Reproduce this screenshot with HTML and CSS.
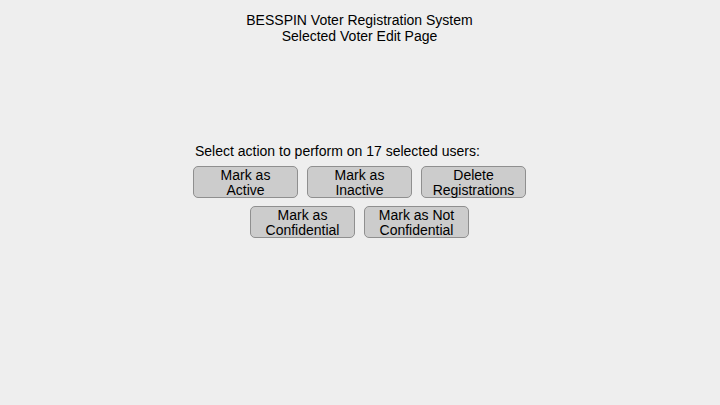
FILE: index.html
```html
<!DOCTYPE html>
<html>
<head>
<meta charset="utf-8">
<link rel="stylesheet" href="styles.css">
</head>
<body>
<header class="header">
  <div>BESSPIN Voter Registration System</div>
  <div>Selected Voter Edit Page</div>
</header>
<main class="panel">
  <div class="prompt">Select action to perform on 17 selected users:</div>
  <div class="actions">
    <button class="btn">Mark as<br>Active</button>
    <button class="btn">Mark as<br>Inactive</button>
    <button class="btn">Delete<br>Registrations</button>
    <button class="btn">Mark as<br>Confidential</button>
    <button class="btn">Mark as Not<br>Confidential</button>
  </div>
</main>
</body>
</html>
```
FILE: styles.css
```css
html {
  margin: 0;
  padding: 0;
  background: #eeeeee;
  width: 720px;
  height: 405px;
  overflow: hidden;
}
body {
  margin: 0 1px 0 0;
  padding: 0;
  font-family: "Liberation Sans", Arial, sans-serif;
  font-size: 14px;
  color: #000;
}
.header {
  padding-top: 12px;
  text-align: center;
  line-height: 16px;
}
.panel {
  width: 333px;
  margin: 99px auto 0;
}
.prompt {
  line-height: 16px;
  padding-left: 2px;
  margin-bottom: 7px;
}
.actions {
  display: flex;
  flex-wrap: wrap;
  justify-content: center;
  gap: 8px 9px;
}
.btn {
  box-sizing: border-box;
  width: 105px;
  height: 32px;
  padding: 1px 0 0;
  background: #cccccc;
  border: 1px solid #8f8f8f;
  border-radius: 5px;
  font-family: "Liberation Sans", Arial, sans-serif;
  font-size: 14px;
  line-height: 15px;
  color: #000;
  text-align: center;
}
```
